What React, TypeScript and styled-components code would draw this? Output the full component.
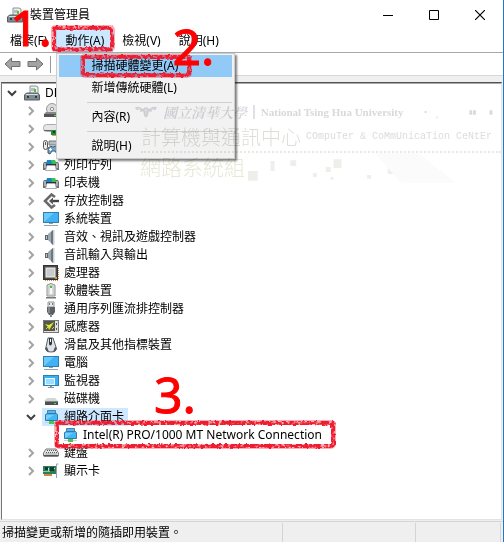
import React from "react";
import styled, { createGlobalStyle, css } from "styled-components";

const GlobalStyle = createGlobalStyle`
  *, *::before, *::after { box-sizing: border-box; }
  body {
    margin: 0;
    background: #fff;
    color: #000;
    font: 12px/18px "Noto Sans", "Noto Sans CJK TC", sans-serif;
  }
  button { font: inherit; color: inherit; border: 0; padding: 0; margin: 0; background: none; }
`;

const Window = styled.main`
  display: flex;
  flex-direction: column;
  min-height: 100vh;
  background: #fff;
  border-right: 1px solid #2079c4;
  overflow: hidden;
`;

const TitleBar = styled.header`
  display: flex;
  align-items: center;
  height: 29px;
  padding-left: 7px;
`;

const Title = styled.h1`
  flex: 1;
  margin: 0 0 0 7px;
  font-size: 12px;
  font-weight: 400;
`;

const CaptionButton = styled.button`
  display: grid;
  place-items: center;
  width: 46px;
  height: 28px;
`;

const MenuBar = styled.nav`
  display: flex;
  height: 24px;
  padding-left: 1px;
  border-bottom: 1px solid #a8a8a8;
`;

const MenuSlot = styled.div`
  position: relative;
`;

const MenuButton = styled.button<{ $open?: boolean }>`
  height: 23px;
  padding: 0 8px;
  border: 1px solid transparent;
  ${(p) => p.$open && css`
    background: #cce8ff;
    border-color: #a9d6fa;
  `}
`;

const Dropdown = styled.div`
  position: absolute;
  z-index: 2;
  top: 24px;
  left: 0;
  width: 179px;
  padding: 1px 2px;
  border: 1px solid #ccc;
  background: #f2f2f2;
  box-shadow: 2px 2px 2px rgba(0, 0, 0, 0.5);
`;

const DropdownItem = styled.button<{ $active?: boolean }>`
  display: block;
  width: 100%;
  height: 22px;
  padding-left: 32px;
  text-align: left;
  background: ${(p) => (p.$active ? "#91c9f7" : "transparent")};
`;

const DropdownRule = styled.hr`
  height: 1px;
  margin: 3px 0 3px 28px;
  border: 0;
  background: #d0d0d0;
`;

const ToolBar = styled.div`
  display: flex;
  align-items: center;
  gap: 6px;
  height: 23px;
  padding-left: 4px;
  border-bottom: 1px solid #d8d8d8;
`;

const ToolButton = styled.button`
  display: flex;
`;

const ToolRule = styled.span`
  width: 1px;
  height: 17px;
  background: #999;
`;

const Body = styled.div`
  display: flex;
  flex: 1;
  padding: 6px 1px 1px;
  background: #efefef;
`;

const TreePanel = styled.section`
  position: relative;
  flex: 1;
  min-width: 0;
  background: #fff;
  border: 1px solid #e3e3e3;
  border-top: 2px groove #a8a8a8;
  border-left-color: #777;
`;

const Tree = styled.ul`
  list-style: none;
  margin: 0;
  padding: 0;
`;

const Row = styled.li<{ $level: number }>`
  display: flex;
  align-items: center;
  height: 18px;
  padding-left: ${(p) => 2 + p.$level * 19}px;
`;

const Expander = styled.button`
  display: grid;
  place-items: center;
  width: 16px;
  height: 18px;
  margin-right: 3px;
`;

const ExpanderSpace = styled.span`
  width: 16px;
  margin-right: 3px;
`;

const Node = styled.span<{ $selected?: boolean }>`
  position: relative;
  display: flex;
  align-items: center;
  gap: 5px;
  height: 18px;
  padding: 0 4px 0 1px;
  white-space: nowrap;
  background: ${(p) => (p.$selected ? "#cde8ff" : "transparent")};
`;

const RoughFrame = styled.span<{ $inset: string }>`
  position: absolute;
  z-index: 3;
  inset: ${(p) => p.$inset};
  border: 5px solid rgba(238, 28, 46, 0.35);
  border-radius: 5px;
  pointer-events: none;

  &::before {
    content: "";
    position: absolute;
    inset: -4px;
    border: 4px solid #ee1c2e;
    border-radius: 4px;
    filter: url(#chalk);
  }
`;

const StepNumber = styled.strong<{ $top: number; $left: number }>`
  position: absolute;
  z-index: 4;
  top: ${(p) => p.$top}px;
  left: ${(p) => p.$left}px;
  color: #f00;
  font-size: 50px;
  line-height: 50px;
  font-weight: 400;
  -webkit-text-stroke: 1px #f00;
  pointer-events: none;
`;

const Watermark = styled.aside`
  position: absolute;
  z-index: 3;
  top: 17px;
  left: 133px;
  right: 0;
  mix-blend-mode: multiply;
  pointer-events: none;
  white-space: nowrap;
  overflow: hidden;
`;

const School = styled.div`
  display: flex;
  align-items: center;
  gap: 6px;
  height: 22px;
`;

const SchoolName = styled.span`
  color: #d8d5dc;
  font: italic 600 14px/22px "Noto Serif CJK TC", "Noto Sans CJK TC", serif;
`;

const SchoolRule = styled.span`
  width: 2px;
  height: 14px;
  background: #e2e0e5;
`;

const SchoolLatin = styled.span`
  color: #d9d9d9;
  font: 600 11px/22px "Liberation Serif", serif;
`;

const Center = styled.div`
  display: flex;
  align-items: center;
  gap: 5px;
  height: 30px;
  margin-left: 6px;
  border-bottom: 2px dotted #e8e8e6;
`;

const CenterName = styled.span`
  color: #deded8;
  font: 300 20px/28px "Noto Sans CJK TC", sans-serif;
`;

const CenterLatin = styled.span`
  color: #dcdcdc;
  font: 10px/28px "Liberation Mono", monospace;
`;

const Division = styled.div`
  display: flex;
  margin-left: 5px;
  height: 32px;
  color: #e7e8d6;
  font: 300 21px/26px "Noto Sans CJK TC", sans-serif;
`;

const StatusBar = styled.footer`
  display: flex;
  height: 21px;
  border-top: 1px solid #d5d5d5;
  background: #efefef;
`;

const StatusCell = styled.div<{ $width?: number }>`
  ${(p) => (p.$width ? `width: ${p.$width}px;` : "flex: 1;")}
  margin-top: 1px;
  padding: 1px 2px;
  border-right: 1px solid #d4d4d4;

  &:last-child { margin-right: 2px; }
`;

const glyphs: Record<string, React.ReactNode> = {
  host: (
    <>
      <path d="M6 1h6l2 1v7H6z" fill="#eef0f0" stroke="#8b9294" />
      <path d="M7 3h4v3H7z" fill="#b5bfc1" />
      <path d="M10 4h2v3h-2z" fill="#58be3a" />
      <path d="M0.500 10l2-2h11l2 2v5H0.500z" fill="#7f8b90" stroke="#555f63" />
      <path d="M2 9h12v1H2z" fill="#d8dfe1" />
      <path d="M3 11h2v2H3zM11 11h2v2h-2z" fill="#333c40" />
    </>
  ),
  disc: (
    <>
      <circle cx="9" cy="6" r="5.5" fill="#ddd" stroke="#999" />
      <circle cx="9" cy="6" r="1.6" fill="#fff" stroke="#888" />
      <path d="M1 11l2-2h10l2 2v3H1z" fill="#888" />
      <path d="M1 11h14v3H1z" fill="#555" />
      <path d="M11 12h2v1h-2z" fill="#5e5" />
    </>
  ),
  ide: (
    <>
      <rect x="0.5" y="3.5" width="15" height="7" rx="3" fill="#e4e6e7" stroke="#aaa" />
      <path d="M1 9h12v1H1z" fill="#666" />
      <path d="M8 9h8v5H8z" fill="#268b3e" />
      <path d="M10 10h2v2h-2zM13 10h2v2h-2z" fill="#143d20" />
      <path d="M9 14h6v1H9z" fill="#d8a64a" />
    </>
  ),
  hid: (
    <>
      <rect x="0.5" y="1.5" width="4" height="9" rx="2" fill="#eee" stroke="#555" />
      <path d="M2 3h1v3H2z" fill="#555" />
      <path d="M6 2h9v4H6z" fill="#b7bcc0" stroke="#777" />
      <path d="M5 9q3-3 5-1 3-2 5 1l1 5-2 1-2-3H9l-2 3-2-1z" fill="#6fa6d0" stroke="#456" />
      <path d="M7 9h1v3H7zM6 10h3v1H6z" fill="#fff" />
    </>
  ),
  printer: (
    <>
      <path d="M1 5h14l1 2v6H0V7z" fill="#6b7074" />
      <path d="M4 3h8l1 4H3z" fill="#1784c7" />
      <path d="M8 3h4l1 4H9z" fill="#37c248" />
      <path d="M2 7h12v2H2z" fill="#303437" />
      <path d="M1 6h2v5H1zM13 6h2v5h-2z" fill="#a9aeb1" />
      <path d="M4 8.500h8l1.500 5h-11z" fill="#fff" stroke="#aab" />
    </>
  ),
  storage: (
    <>
      <path d="M12 4L8.500 1.500 2 8l6.500 6.500L12 12" fill="none" stroke="#6a6a6a" strokeWidth="2.600" />
      <path d="M8 8h8" stroke="#444" strokeWidth="2.400" />
      <path d="M10 4.500L6 8l4 3.500z" fill="#555" />
    </>
  ),
  computer: (
    <>
      <rect x="0.5" y="1.500" width="15" height="10" fill="#3fb3f5" stroke="#2d7fae" />
      <path d="M1 11V2h10z" fill="#6bc9fb" />
      <path d="M6 12h4v1H6z" fill="#8da0ab" />
      <path d="M1 14h14v1H1z" fill="#93a5b1" />
    </>
  ),
  speaker: (
    <>
      <path d="M2 6h3v5H2z" fill="#5c6870" />
      <path d="M5 5l5-4v15l-5-5z" fill="#9ca7ae" />
      <path d="M8 3l2-2v15l-2-2z" fill="#6c7880" />
      <path d="M10 1h1.500v15H10z" fill="#c7d0d5" />
      <path d="M3 7h1v3H3z" fill="#bbc6cc" />
    </>
  ),
  chip: (
    <>
      <path d="M2 15.500h13M15.500 3v12" stroke="#c9893a" strokeDasharray="1 1" />
      <rect x="0.5" y="0.5" width="14" height="14" fill="#4c4c4c" stroke="#333" />
      <rect x="3" y="3" width="9" height="9" fill="#c9cbcc" stroke="#f2f2f2" />
      <path d="M12 12h2v2h-2z" fill="#d89b3c" />
    </>
  ),
  software: (
    <>
      <path d="M4 2q4-3 8 0v11H4z" fill="#e2e4e4" stroke="#8d9191" />
      <path d="M6 3h4v9H6z" fill="#f9f9f9" stroke="#b8bcbc" />
      <path d="M7 3h2v2H7z" fill="#52bf32" />
      <path d="M3 14h10v1.500H3z" fill="#777" />
    </>
  ),
  usb: (
    <>
      <path d="M5 1h6v5H5z" fill="#e8e8e8" stroke="#999" />
      <path d="M6 2h1v2H6zM9 2h1v2H9z" fill="#777" />
      <path d="M4 6h8v5l-2 3H6l-2-3z" fill="#5d6163" />
      <path d="M5 6h2v6H5z" fill="#828789" />
      <path d="M7 13h2v3H7z" fill="#888" />
    </>
  ),
  sensor: (
    <>
      <rect x="0.5" y="1.500" width="15" height="12" fill="#e0e0da" stroke="#777" />
      <rect x="1.500" y="2.500" width="10" height="9" fill="#4d5b48" stroke="#555" />
      <path d="M2 5l4 1 5-3-3 5-2 3-1-3z" fill="#e8e831" />
      <path d="M3 10l2-2M9 10l2-2" stroke="#d4d840" />
      <path d="M13 4h1v2h-1zM13 9h1v2h-1z" fill="#555" />
    </>
  ),
  mouse: (
    <>
      <path d="M5 1h5l3 9q1 5-5 5t-5-5z" fill="#dfe3e7" stroke="#555f69" />
      <path d="M6 1h3v6q-2 3-3 0z" fill="#303943" />
      <path d="M7 2h1v3H7z" fill="#fff" />
      <path d="M2 11q1 4 4 4l-2-5zM14 11q-1 4-4 4l2-5z" fill="#4c5560" />
    </>
  ),
  monitor: (
    <>
      <rect x="0.5" y="2.500" width="15" height="10" fill="#3daeee" stroke="#2f7fa8" />
      <rect x="2.500" y="5.500" width="9" height="6" fill="#9addff" stroke="#e3f5ff" />
      <path d="M7 13h2v1H7zM5 14h6v1H5z" fill="#7f98a5" />
    </>
  ),
  drive: (
    <>
      <path d="M4 7h8l3 3H1z" fill="#d5d6d7" />
      <path d="M2 10h13v4H2z" fill="#4d5052" />
      <path d="M2 10h13v1H2z" fill="#858889" />
      <path d="M11 12h2v1h-2z" fill="#4be64b" />
    </>
  ),
  network: (
    <>
      <path d="M4.500 1.500h8v3h-8z" fill="#5cb6ea" stroke="#4187b4" />
      <path d="M2.500 5.500l2-1h9l1 1v6h-12z" fill="#46b5f4" stroke="#3079a8" />
      <path d="M3 11V6h8z" fill="#77cdfc" />
      <path d="M2 13h13v1H2z" fill="#c9d1cc" />
      <path d="M6 12h5v3H6z" fill="#48c94d" />
    </>
  ),
  keyboard: (
    <>
      <path d="M3 4h10l2.500 4v3H0.500V8z" fill="#e8e8e8" stroke="#777" />
      <path d="M4 5.500h9M3 7.500h11M2.500 9h11" stroke="#555" strokeDasharray="1 1" />
      <path d="M1 10h14v1.500H1z" fill="#555" />
    </>
  ),
  display: (
    <>
      <path d="M0 3h13v8H0z" fill="#2b7d5b" />
      <path d="M2 4h3v3H2zM7 4h4v4H7z" fill="#153c2d" />
      <path d="M5 5h1v3H5zM11 5h1v1h-1z" fill="#b9e2cd" />
      <path d="M1 11h8v2H1z" fill="#d18b3c" />
      <path d="M15.500 1h-2v14" fill="none" stroke="#9ba0a0" />
      <path d="M0 8h7v1H0z" fill="#89c5a8" />
    </>
  ),
};

const Glyph = ({ name }: { name: string }) => (
  <svg width="16" height="16" viewBox="0 0 16 16" aria-hidden="true">{glyphs[name]}</svg>
);

const Chevron = ({ open }: { open?: boolean }) => (
  <svg width="10" height="10" viewBox="0 0 10 10" aria-hidden="true">
    <path
      d={open ? "M1 3l4 4 4-4" : "M3 1l4 4-4 4"}
      fill="none"
      stroke={open ? "#404040" : "#a3a3a3"}
      strokeWidth="2"
    />
  </svg>
);

const Arrow = ({ forward }: { forward?: boolean }) => (
  <svg width="17" height="14" viewBox="0 0 17 14" aria-hidden="true">
    <path
      d={forward ? "M16 7L9.500 1v3.500H1v5h8.500V13z" : "M1 7l6.500-6v3.500H16v5H7.500V13z"}
      fill="#a3a3a3"
      stroke="#707070"
    />
  </svg>
);

type Device = { icon: string; label?: string; level?: number; open?: boolean; selected?: boolean; step?: string };

const devices: Device[] = [
  { icon: "host", label: "DE", level: 0, open: true },
  { icon: "disc" },
  { icon: "ide" },
  { icon: "hid" },
  { icon: "printer", label: "列印佇列" },
  { icon: "printer", label: "印表機" },
  { icon: "storage", label: "存放控制器" },
  { icon: "computer", label: "系統裝置" },
  { icon: "speaker", label: "音效、視訊及遊戲控制器" },
  { icon: "speaker", label: "音訊輸入與輸出" },
  { icon: "chip", label: "處理器" },
  { icon: "software", label: "軟體裝置" },
  { icon: "usb", label: "通用序列匯流排控制器" },
  { icon: "sensor", label: "感應器" },
  { icon: "mouse", label: "滑鼠及其他指標裝置" },
  { icon: "computer", label: "電腦" },
  { icon: "monitor", label: "監視器" },
  { icon: "drive", label: "磁碟機" },
  { icon: "network", label: "網路介面卡", open: true, selected: true },
  { icon: "network", label: "Intel(R) PRO/1000 MT Network Connection", level: 2, step: "3." },
  { icon: "keyboard", label: "鍵盤" },
  { icon: "display", label: "顯示卡" },
];

const DeviceRow = ({ icon, label, level = 1, open, selected, step }: Device) => (
  <Row $level={level} role="treeitem" aria-level={level + 1} aria-expanded={open} aria-selected={!!selected}>
    {level === 2 ? <ExpanderSpace /> : (
      <Expander aria-label={open ? "−" : "+"}><Chevron open={open} /></Expander>
    )}
    <Node $selected={selected}>
      <Glyph name={icon} />
      {label}
      {step && <RoughFrame $inset="-6px -10px -5px -7px" />}
      {step && <StepNumber $top={-57} $left={93}>{step}</StepNumber>}
    </Node>
  </Row>
);

const Emblem = () => (
  <svg width="24" height="14" viewBox="0 0 24 14" aria-hidden="true">
    <path
      d="M0 2q4-2 7 1l2 1 1-2h4l1 2 2-1q3-3 7-1l-2 3-3-1-1 3-3-1-1 5-2 2-2-2-1-5-3 1-1-3-3 1z"
      fill="#d8d5dc"
    />
    <path d="M10 5h4M12 3v8M2 3l5 2M22 3l-5 2" stroke="#f2f2f2" />
  </svg>
);

const Pixels = () => (
  <svg width="260" height="32" viewBox="0 0 260 32" aria-hidden="true" fill="#eeefeb">
    <path d="M3 18h10v10H3zM26 8h4v10h-4zM46 7h6v6h-6zM69 20h4v4h-4zM82 14h5v5h-5zM90 6h8v9h-8zM87 24h3v3h-3zM124 22h4v4h-4zM145 12h6v9h-6zM169 8h5v5h-5zM180 18h4v3h-4z" />
    <path d="M132 0h44l38 30h-56z" fill="#fbfbfb" />
  </svg>
);

const Marks = () => (
  <svg width="100" height="22" viewBox="0 0 100 22" aria-hidden="true" fill="#d9d9d9">
    <path d="M16 10h2v2h-2zM29 16h1v2h-1zM65 9h3v5h-3zM69 9h3v5h-3zM87 9h3v5h-3z" />
  </svg>
);

export default function App() {
  return (
    <Window>
      <GlobalStyle />
      <svg width="0" height="0" display="none" aria-hidden="true">
        <filter id="chalk" x="-10%" y="-20%" width="120%" height="140%">
          <feTurbulence type="fractalNoise" baseFrequency="0.3" numOctaves="2" seed="4" result="n" />
          <feDisplacementMap in="SourceGraphic" in2="n" scale="4" xChannelSelector="R" yChannelSelector="G" result="d" />
          <feColorMatrix in="n" type="matrix" values="0 0 0 0 0  0 0 0 0 0  0 0 0 0 0  0 0 4 0 -1" result="m" />
          <feComposite in="d" in2="m" operator="in" />
        </filter>
      </svg>

      <TitleBar>
        <Glyph name="host" />
        <Title>裝置管理員</Title>
        <CaptionButton aria-label="Minimize">
          <svg width="10" height="10"><path d="M0 5.500h10" stroke="#000" /></svg>
        </CaptionButton>
        <CaptionButton aria-label="Maximize">
          <svg width="10" height="10"><path d="M.5.5h9v9h-9z" fill="none" stroke="#000" /></svg>
        </CaptionButton>
        <CaptionButton aria-label="Close">
          <svg width="10" height="10"><path d="M0 0l10 10M10 0L0 10" stroke="#000" strokeWidth="1.200" /></svg>
        </CaptionButton>
      </TitleBar>

      <MenuBar>
        <MenuSlot>
          <MenuButton>檔案(F)</MenuButton>
          <StepNumber $top={-27} $left={9}>1.</StepNumber>
        </MenuSlot>
        <MenuSlot>
          <MenuButton $open aria-expanded="true">動作(A)</MenuButton>
          <RoughFrame $inset="-4px -2px 0 -5px" />
          <Dropdown role="menu">
            <DropdownItem role="menuitem" $active>掃描硬體變更(A)</DropdownItem>
            <DropdownItem role="menuitem">新增傳統硬體(L)</DropdownItem>
            <DropdownRule />
            <DropdownItem role="menuitem">內容(R)</DropdownItem>
            <DropdownRule />
            <DropdownItem role="menuitem">說明(H)</DropdownItem>
            <RoughFrame $inset="0 42px 80px 23px" />
            <StepNumber $top={-33} $left={115}>2.</StepNumber>
          </Dropdown>
        </MenuSlot>
        <MenuSlot><MenuButton>檢視(V)</MenuButton></MenuSlot>
        <MenuSlot><MenuButton>說明(H)</MenuButton></MenuSlot>
      </MenuBar>

      <ToolBar>
        <ToolButton aria-label="Back"><Arrow /></ToolButton>
        <ToolButton aria-label="Forward"><Arrow forward /></ToolButton>
        <ToolRule />
      </ToolBar>

      <Body>
        <TreePanel>
          <Tree role="tree">
            {devices.map((device, i) => <DeviceRow key={i} {...device} />)}
          </Tree>
          <Watermark>
            <School>
              <Emblem />
              <SchoolName>國立清華大學</SchoolName>
              <SchoolRule />
              <SchoolLatin>National Tsing Hua University</SchoolLatin>
              <Marks />
            </School>
            <Center>
              <CenterName>計算機與通訊中心</CenterName>
              <CenterLatin>COmpuTer &amp; CoMmUnicaTion CeNtEr</CenterLatin>
            </Center>
            <Division>
              網路系統組
              <Pixels />
            </Division>
          </Watermark>
        </TreePanel>
      </Body>

      <StatusBar>
        <StatusCell>掃描變更或新增的隨插即用裝置。</StatusCell>
        <StatusCell $width={133} />
        <StatusCell $width={85} />
      </StatusBar>
    </Window>
  );
}
